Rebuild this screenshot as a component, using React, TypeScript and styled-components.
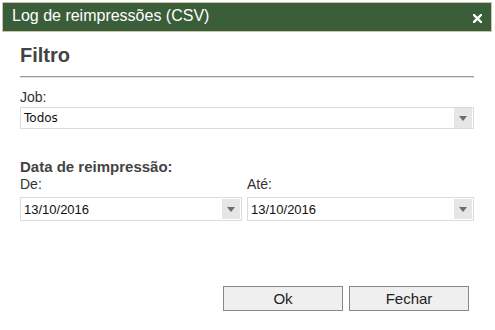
import React from "react";
import styled, { createGlobalStyle } from "styled-components";

const GlobalStyle = createGlobalStyle`
  html, body {
    margin: 0;
    padding: 0;
    background: #fff;
  }
  body {
    font-family: "Liberation Sans", Arial, sans-serif;
  }
`;

interface SelectProps {
  value: string;
  mono?: boolean;
  tall?: boolean;
}

const SelectBox: React.FC<SelectProps> = ({ value, mono, tall }) => (
  <Select $tall={tall}>
    <SelectValue $mono={mono}>{value}</SelectValue>
    <ArrowBox>
      <svg width="8" height="5" viewBox="0 0 8 5">
        <path d="M0 0 H8 L4 5 Z" fill="#6b6b6b" />
      </svg>
    </ArrowBox>
  </Select>
);

const App: React.FC = () => {
  return (
    <>
      <GlobalStyle />
      <Dialog>
        <TitleBar>
          <TitleText>Log de reimpressões (CSV)</TitleText>
          <CloseButton aria-label="Fechar">
            <svg width="9" height="9" viewBox="0 0 9 9">
              <path
                d="M1 1 L8 8 M8 1 L1 8"
                stroke="#fff"
                strokeWidth="2.4"
                strokeLinecap="square"
              />
            </svg>
          </CloseButton>
        </TitleBar>

        <Content>
          <Heading>Filtro</Heading>
          <Divider />

          <Field>
            <Label>Job:</Label>
            <SelectBox value="Todos" mono />
          </Field>

          <Section>
            <SectionTitle>Data de reimpressão:</SectionTitle>
            <DateRow>
              <DateField $width="222px">
                <Label>De:</Label>
                <SelectBox value="13/10/2016" tall />
              </DateField>
              <DateField>
                <Label>Até:</Label>
                <SelectBox value="13/10/2016" tall />
              </DateField>
            </DateRow>
          </Section>

          <Actions>
            <Button>Ok</Button>
            <Button>Fechar</Button>
          </Actions>
        </Content>
      </Dialog>
    </>
  );
};

export default App;

const Dialog = styled.div`
  width: 495px;
  height: 330px;
  box-sizing: border-box;
  padding: 2px 3px 0 2px;
  display: flex;
  flex-direction: column;
`;

const TitleBar = styled.div`
  height: 28px;
  background: #3b5e3a;
  border: 1px solid #cbc4a9;
  display: flex;
  align-items: center;
  justify-content: space-between;
  padding: 0 9px 0 9px;
`;

const TitleText = styled.span`
  color: #fff;
  font-size: 16px;
  line-height: 18px;
  margin-top: -3px;
`;

const CloseButton = styled.span`
  display: flex;
  align-items: center;
  margin-top: 2px;
`;

const Content = styled.div`
  flex: 1;
  display: flex;
  flex-direction: column;
  padding: 0 18px 0 18px;
`;

const Heading = styled.h2`
  margin: 11px 0 0;
  font-size: 20px;
  line-height: 24px;
  font-weight: bold;
  color: #444;
`;

const Divider = styled.div`
  margin-top: 9px;
  height: 1px;
  background: #9a9a9a;
  border-bottom: 1px solid #e2e2e2;
`;

const Field = styled.div`
  display: flex;
  flex-direction: column;
  min-width: 0;
`;

const DateField = styled(Field)<{ $width?: string }>`
  flex: ${(p) => (p.$width ? `0 0 ${p.$width}` : "1")};
`;

const Label = styled.label`
  font-size: 14px;
  line-height: 17px;
  color: #333;
  margin-top: 11px;
  margin-bottom: 1px;
`;

const Select = styled.div<{ $tall?: boolean }>`
  height: ${(p) => (p.$tall ? "24px" : "22px")};
  box-sizing: border-box;
  border: 1px solid #dcdcdc;
  display: flex;
  align-items: center;
  justify-content: space-between;
  background: #fff;
`;

const SelectValue = styled.span<{ $mono?: boolean }>`
  padding-left: 3px;
  font-family: ${(p) =>
    p.$mono
      ? `"DejaVu Sans", Tahoma, sans-serif`
      : `"Liberation Sans", Arial, sans-serif`};
  font-size: ${(p) => (p.$mono ? "12px" : "13px")};
  color: #111;
`;

const ArrowBox = styled.span`
  width: 18px;
  height: 20px;
  margin-right: 1px;
  background: #e6e6e6;
  display: flex;
  align-items: center;
  justify-content: center;
`;

const Section = styled.div`
  margin-top: 29px;
`;

const SectionTitle = styled.div`
  font-size: 15px;
  line-height: 18px;
  font-weight: bold;
  color: #444;
`;

const DateRow = styled.div`
  display: flex;
  gap: 5px;

  ${Label} {
    margin-top: 0;
    margin-bottom: 4px;
  }
`;

const Actions = styled.div`
  display: flex;
  justify-content: flex-end;
  gap: 6px;
  margin-top: auto;
  margin-bottom: 19px;
  padding-right: 5px;
`;

const Button = styled.button`
  width: 120px;
  height: 25px;
  box-sizing: border-box;
  background: #efefef;
  border: 1px solid #888;
  font-family: "Liberation Sans", Arial, sans-serif;
  font-size: 15px;
  color: #222;
  padding: 0;
`;
